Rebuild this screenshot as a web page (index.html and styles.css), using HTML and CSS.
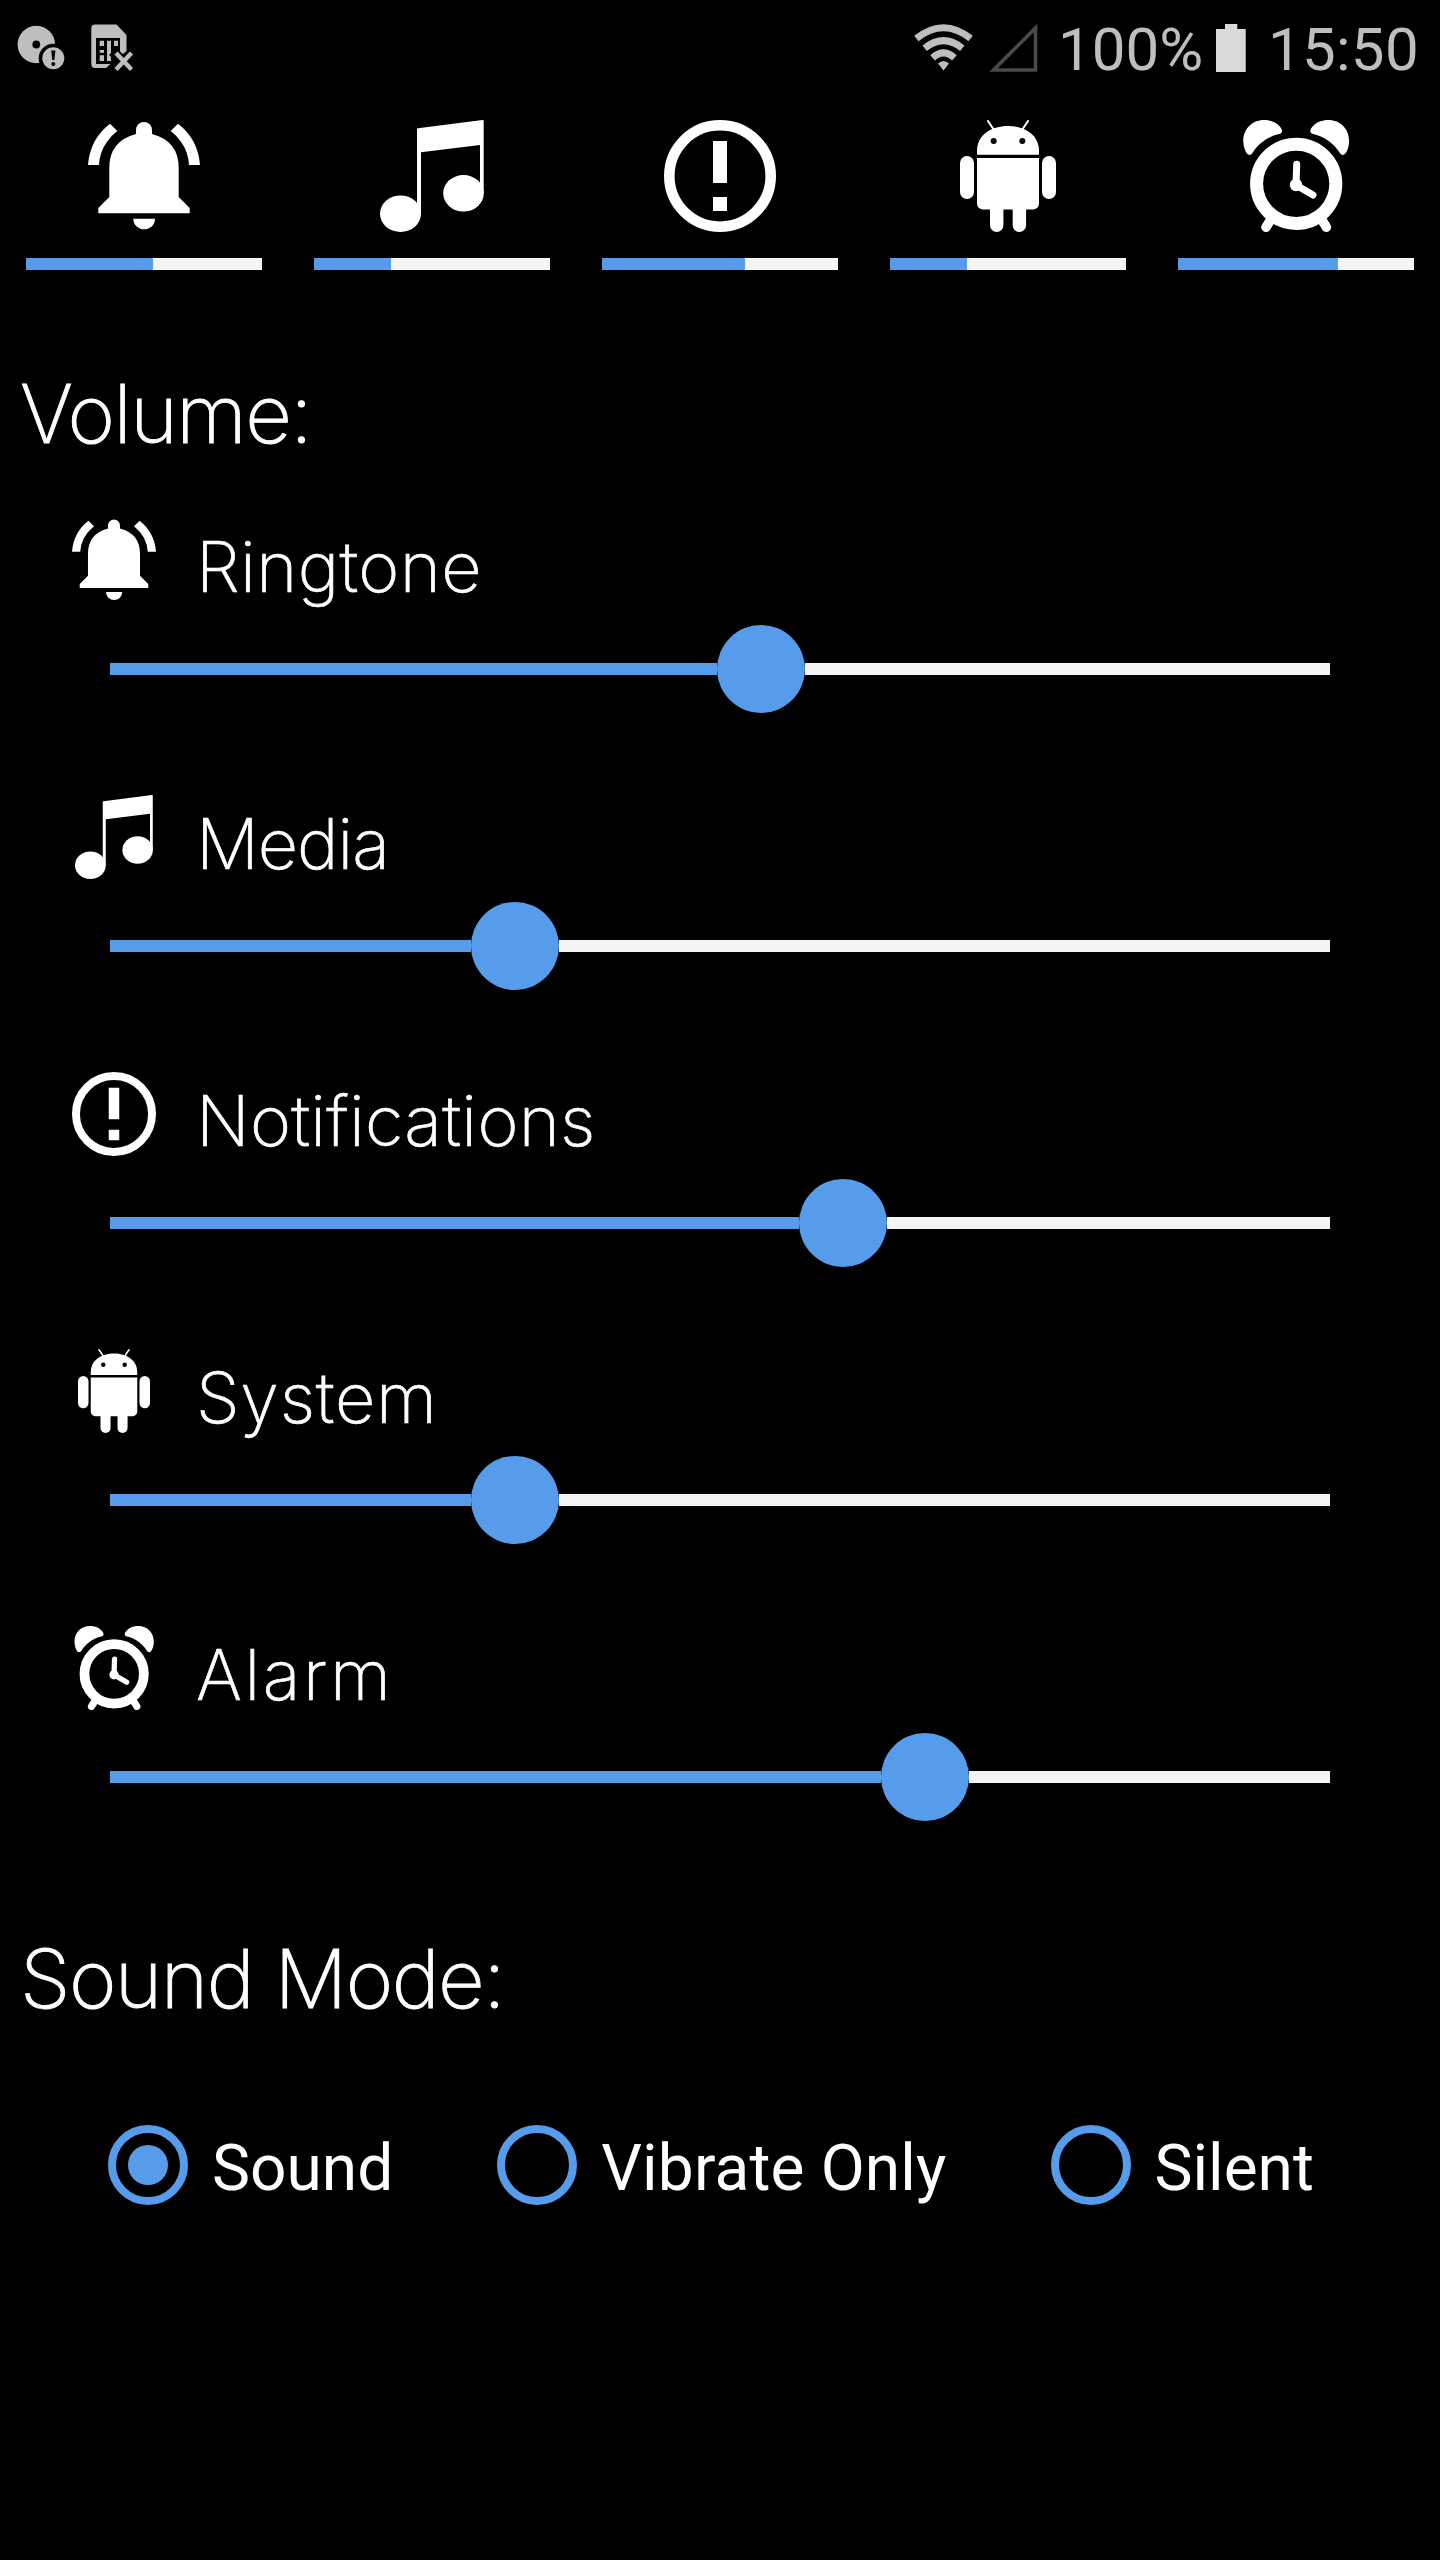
FILE: index.html
```html
<!DOCTYPE html>
<html lang="en">
  <head>
    <meta charset="UTF-8" />
    <meta name="viewport" content="width=device-width, initial-scale=1.0" />
    <title>Volume</title>
    <link rel="stylesheet" href="styles.css">
  </head>
  <body>
    <!-- shared icons -->
    <svg class="sprite" width="0" height="0">
      <symbol id="bell" viewBox="0 0 112 112">
        <path d="M22 3.7 29.3 11Q12 25 11 45H0Q2 19 22 3.7ZM90 3.7 82.7 11Q100 25 101 45H112Q110 19 90 3.7Z" />
        <path d="M48 14V10a8 8 0 0 1 16 0V14Q90.7 21 90.7 48V77L101.7 88V93.3H10.3V88L21.3 77V48Q21.3 21 48 14Z" />
        <path d="M45.3 98.7H67a10.8 10.6 0 0 1-21.7 0Z" />
      </symbol>
      <symbol id="music" viewBox="0 0 112 112">
        <path d="M41 9.5Q41 8.3 42 8.2L106.5 0Q107.7 0 107.7 1V74H104V25L45 32.3V94H41Z" />
        <ellipse cx="24.5" cy="93.7" rx="20.5" ry="18.3" />
        <ellipse cx="87.5" cy="73.3" rx="20.3" ry="18.3" />
      </symbol>
      <symbol id="alert" viewBox="0 0 112 112">
        <circle cx="56" cy="56" r="50.7" fill="none" stroke="#fff" stroke-width="10.6" />
        <path d="M49 21H63V63H49ZM49 77H63V91H49Z" />
      </symbol>
      <symbol id="android" viewBox="0 0 112 112">
        <path d="M25 34.7V31C25 15 39 6 56 6S87 15 87 31V34.7Z" />
        <path d="M36 1 42 10M76 1 70 10" stroke="#fff" stroke-width="2" stroke-linecap="round" />
        <circle cx="41.7" cy="21" r="3" fill="#000" />
        <circle cx="70.3" cy="21" r="3" fill="#000" />
        <path d="M25 38H87V83.5a6 6 0 0 1-6 6H31a6 6 0 0 1-6-6Z" />
        <rect x="8" y="36" width="14" height="43" rx="7" />
        <rect x="90" y="36" width="14" height="43" rx="7" />
        <rect x="38" y="80" width="13.4" height="32" rx="6.7" />
        <rect x="60.7" y="80" width="13.4" height="32" rx="6.7" />
      </symbol>
      <symbol id="clock" viewBox="0 0 112 112">
        <path d="M41 8C37 2 30 0 24 0 12 0 3.3 9 3.3 21 3.3 26 5 31 7 33.5 8.5 35.5 11 35.5 12.5 33 18 24 28 16.5 39 14 42 13.5 43 11 41 8Z" />
        <path d="M71.4 8C75.4 2 82.4 0 88.4 0 100.4 0 109.1 9 109.1 21 109.1 26 107.4 31 105.4 33.5 103.9 35.5 101.4 35.5 99.9 33 94.4 24 84.4 16.5 73.4 14 70.4 13.5 69.4 11 71.4 8Z" />
        <g fill="none" stroke="#fff" stroke-linecap="round">
          <circle cx="56.2" cy="63.8" r="39.6" stroke-width="13" />
          <path d="M30.5 100 26 107.2M82 100 86.4 107.2" stroke-width="9.6" />
          <path d="M56.7 44.3 56 65 73 75" stroke-width="7" />
        </g>
        <circle cx="56" cy="65" r="6.2" />
      </symbol>
    </svg>

    <header class="status">
      <svg class="disc" width="50" height="50" viewBox="0 0 50 50">
        <circle cx="19.3" cy="20.5" r="18.7" />
        <circle cx="19.3" cy="20.5" r="3.9" fill="#000" />
        <circle cx="36.3" cy="34.3" r="14.6" fill="#000" />
        <circle cx="36.3" cy="34.3" r="11" />
        <path d="M34.2 26.5H38.4L37.4 36H35.2Z" fill="#000" />
        <circle cx="36.3" cy="40" r="2" fill="#000" />
      </svg>
      <svg class="sim" width="44" height="50" viewBox="0 0 44 50">
        <path d="M4 .5H25.5L35.5 11V27L32 30 29 27.5V14H5V40H19.5L15 44H4Q.3 44 .3 40V4Q.3 .5 4 .5Z" />
        <path d="M8.7 16.7H13V22H8.7ZM8.7 26H13V28.7H8.7ZM8.7 31.3H13V37H8.7ZM16 16.7H20V29L18 31 20 33V37H16ZM23 16.7H27V22H23Z" />
        <path d="M25 29 40.5 45.5M40.5 29 25 45.5" stroke="#bebebe" stroke-width="4.4" />
      </svg>
      <svg class="wifi" width="60" height="48" viewBox="0 0 60 48">
        <g fill="none" stroke="#bebebe" stroke-width="7">
          <path d="M2.4 14.5Q29.5-7 56.6 14.5" />
          <path d="M10.7 24.2Q29.5 9 48.3 24.2" />
          <path d="M18.6 33.8Q29.5 24 40.4 33.8" />
        </g>
        <path d="M24 39.5Q29.5 34.5 35 39.5L29.5 46.5Z" />
      </svg>
      <svg class="signal" width="50" height="48" viewBox="0 0 50 48">
        <path d="M5.5 46H47.5V4Z" fill="none" stroke="#4a4a4a" stroke-width="3.6" />
      </svg>
      <span class="percent">100%</span>
      <svg class="battery" width="30" height="48" viewBox="0 0 30 48">
        <path d="M9 0H21.3V5H29.7V48H0V5H9Z" fill="#d9d9d9" />
      </svg>
      <span class="time">15:50</span>
    </header>

    <section class="summary">
      <div class="item">
        <svg class="icon"><use href="#bell" /></svg>
        <div class="bar"><div class="fill" style="width: 127px"></div></div>
      </div>
      <div class="item">
        <svg class="icon"><use href="#music" /></svg>
        <div class="bar"><div class="fill" style="width: 77px"></div></div>
      </div>
      <div class="item">
        <svg class="icon"><use href="#alert" /></svg>
        <div class="bar"><div class="fill" style="width: 143px"></div></div>
      </div>
      <div class="item">
        <svg class="icon"><use href="#android" /></svg>
        <div class="bar"><div class="fill" style="width: 77px"></div></div>
      </div>
      <div class="item">
        <svg class="icon"><use href="#clock" /></svg>
        <div class="bar"><div class="fill" style="width: 160px"></div></div>
      </div>
    </section>

    <h2>Volume:</h2>
    <section class="streams">
      <div class="stream ringtone">
        <div class="name"><svg class="icon"><use href="#bell" /></svg><span>Ringtone</span></div>
        <div class="slider"><div class="fill" style="width: 607px"></div><div class="thumb"></div><div class="rest"></div></div>
      </div>
      <div class="stream media">
        <div class="name"><svg class="icon"><use href="#music" /></svg><span>Media</span></div>
        <div class="slider"><div class="fill" style="width: 361px"></div><div class="thumb"></div><div class="rest"></div></div>
      </div>
      <div class="stream notifications">
        <div class="name"><svg class="icon"><use href="#alert" /></svg><span>Notifications</span></div>
        <div class="slider"><div class="fill" style="width: 689px"></div><div class="thumb"></div><div class="rest"></div></div>
      </div>
      <div class="stream system">
        <div class="name"><svg class="icon"><use href="#android" /></svg><span>System</span></div>
        <div class="slider"><div class="fill" style="width: 361px"></div><div class="thumb"></div><div class="rest"></div></div>
      </div>
      <div class="stream alarm">
        <div class="name"><svg class="icon"><use href="#clock" /></svg><span>Alarm</span></div>
        <div class="slider"><div class="fill" style="width: 771px"></div><div class="thumb"></div><div class="rest"></div></div>
      </div>
    </section>

    <h2>Sound Mode:</h2>
    <section class="modes">
      <div class="mode checked"><i class="radio"></i><span>Sound</span></div>
      <div class="mode vibrate"><i class="radio"></i><span>Vibrate Only</span></div>
      <div class="mode"><i class="radio"></i><span>Silent</span></div>
    </section>
  </body>
</html>
```

FILE: styles.css
```css
* {
  margin: 0;
  padding: 0;
  box-sizing: border-box;
}
body {
  background: #000;
  color: #fff;
  width: 1440px;
  height: 2560px;
  overflow: hidden;
  font-family: Inter, sans-serif;
}
svg {
  display: block;
  flex: none;
  fill: #fff;
}
.sprite {
  position: absolute;
}

/* status bar */
.status {
  display: flex;
  align-items: flex-start;
  height: 120px;
  padding: 24px 24px 0 17px;
  color: #bebebe;
  font: 60px/52px Roboto, sans-serif;
  white-space: nowrap;
}
.status svg {
  fill: #bebebe;
}
.sim {
  margin-left: 24px;
}
.wifi {
  margin-left: 779px;
}
.signal {
  margin-left: 14px;
}
.percent {
  width: 144px;
  margin-left: 20px;
}
.battery {
  margin-left: 14px;
}
.time {
  margin-left: 22px;
  letter-spacing: 0.3px;
}

.summary {
  display: grid;
  grid-template-columns: repeat(5, 1fr);
  height: 150px;
}
.summary .item {
  padding: 0 26px;
}
.summary .icon {
  width: 112px;
  height: 112px;
  margin: 0 auto 26px;
}
.bar {
  height: 12px;
  background: #f4f4f4;
}
.fill {
  height: 12px;
  background: #569ceb;
}

h2 {
  margin: 94px 0 0 20px;
  font-size: 81px;
  font-weight: 200;
  line-height: 100px;
  letter-spacing: -1.5px;
  -webkit-text-stroke: 0.9px #fff;
}

.streams {
  display: grid;
  gap: 82px;
  margin-top: 54px;
}
.name {
  display: flex;
  height: 84px;
  padding-left: 72px;
}
.name .icon {
  width: 84px;
  height: 84px;
}
.name span {
  margin-left: 40px;
  font-size: 70px;
  font-weight: 200;
  line-height: 98px;
  -webkit-text-stroke: 0.7px #fff;
}
.ringtone span {
  letter-spacing: 0.4px;
}
.media span {
  letter-spacing: -1px;
}
.notifications span {
  letter-spacing: 0.3px;
}
.system span {
  letter-spacing: 0.8px;
}
.alarm span {
  letter-spacing: 2.6px;
}
.slider {
  display: flex;
  align-items: center;
  height: 88px;
  margin: 23px 110px 0;
}
.thumb {
  width: 88px;
  height: 88px;
  border-radius: 50%;
  background: #569ceb;
}
.rest {
  flex: 1;
  height: 12px;
  background: #f4f4f4;
}

.streams + h2 {
  margin-top: 108px;
}
.modes {
  display: flex;
  gap: 104px;
  margin: 96px 0 0 108px;
}
.mode {
  display: flex;
  height: 80px;
  font: 64px/88px Roboto, sans-serif;
  white-space: nowrap;
}
.vibrate {
  letter-spacing: 0.15px;
}
.radio {
  display: flex;
  width: 80px;
  height: 80px;
  margin-right: 24px;
  border: 8px solid #569ceb;
  border-radius: 50%;
}
.checked .radio::before {
  content: '';
  width: 40px;
  height: 40px;
  margin: auto;
  border-radius: 50%;
  background: #569ceb;
}
```
